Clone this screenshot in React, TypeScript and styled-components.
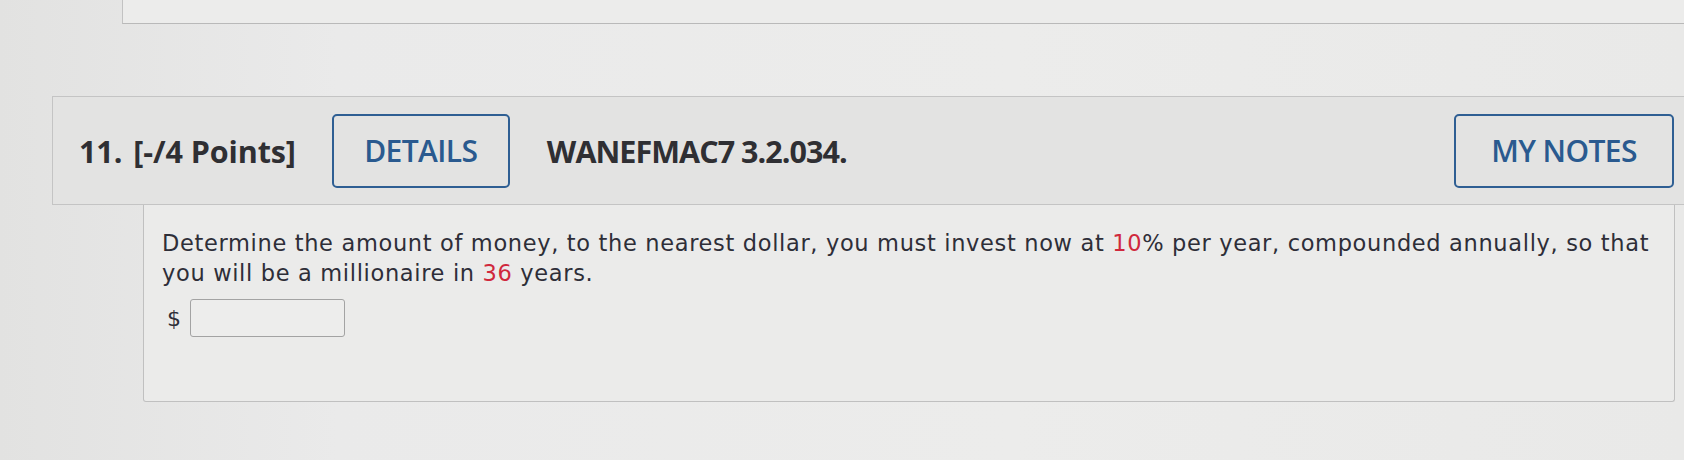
import React from "react";
import styled, { createGlobalStyle } from "styled-components";

const GlobalStyle = createGlobalStyle`
  html, body {
    margin: 0;
    padding: 0;
    background: #e8e8e7;
    overflow: hidden;
  }
  #root {
    width: 1684px;
    height: 460px;
    overflow: hidden;
  }
`;

const Page = styled.div`
  width: 1684px;
  height: 460px;
  overflow: hidden;
  background: linear-gradient(90deg, #e2e2e1 0%, #eaeaea 20%, #ececeb 60%, #e9e9e8 100%);
`;

const PrevBox = styled.div`
  height: 23px;
  margin-left: 122px;
  margin-right: -20px;
  background: #ececeb;
  border-left: 1.5px solid #c2c2c2;
  border-bottom: 1.5px solid #b9b9b9;
`;

const Question = styled.section`
  margin-top: 72px;
  margin-left: 52px;
  margin-right: -20px;
`;

const Header = styled.div`
  box-sizing: border-box;
  height: 109px;
  display: flex;
  align-items: center;
  padding-left: 26px;
  padding-right: 29px;
  background: #e3e3e2;
  border: 1.5px solid #c4c4c4;
  font-family: "Open Sans", "Liberation Sans", sans-serif;
  color: #2f2f33;
`;

const HeadText = styled.span<{ $gap?: number; $track?: number }>`
  font-size: 30.5px;
  font-weight: 700;
  white-space: nowrap;
  margin-left: ${(p) => p.$gap ?? 0}px;
  letter-spacing: ${(p) => p.$track ?? -0.1}px;
`;

const OutlineButton = styled.button<{ $width: number; $gap?: number }>`
  box-sizing: border-box;
  width: ${(p) => p.$width}px;
  height: 74px;
  margin-left: ${(p) => p.$gap ?? 0}px;
  background: transparent;
  border: 2.5px solid #2f5f93;
  border-radius: 5px;
  color: #2a5a8f;
  font-family: "Open Sans", "Liberation Sans", sans-serif;
  font-size: 30px;
  font-weight: 600;
  letter-spacing: -0.6px;
  display: flex;
  align-items: center;
  justify-content: center;
  padding: 0;
`;

const Spacer = styled.div`
  flex: 1;
`;

const Body = styled.div`
  box-sizing: border-box;
  margin-left: 91px;
  width: 1532px;
  padding: 23px 0 64px 18px;
  background: #ebebea;
  border: 1.5px solid #c0c0c0;
  border-top: none;
  border-radius: 0 0 3px 3px;
`;

const Prompt = styled.p`
  margin: 0;
  font-family: "DejaVu Sans", Verdana, sans-serif;
  font-size: 22.5px;
  line-height: 30px;
  color: #2e2e38;
  letter-spacing: 0.66px;
`;

const Red = styled.span`
  color: #d0283c;
`;

const AnswerRow = styled.div`
  display: flex;
  align-items: center;
  margin-top: 11px;
  gap: 9px;
  padding-left: 5px;
`;

const Dollar = styled.span`
  font-family: "DejaVu Sans", Verdana, sans-serif;
  font-size: 22px;
  color: #2e2e38;
`;

const AnswerInput = styled.input`
  box-sizing: border-box;
  width: 155px;
  height: 38px;
  border: 1.5px solid #a3a3a3;
  border-radius: 3px;
  background: #ededec;
  outline: none;
`;

export default function App() {
  return (
    <>
      <GlobalStyle />
      <Page>
        <PrevBox />
        <Question>
          <Header>
            <HeadText>11.</HeadText>
            <HeadText $gap={11}>[-/4 Points]</HeadText>
            <OutlineButton $width={178} $gap={36}>DETAILS</OutlineButton>
            <HeadText $gap={37} $track={-0.95}>WANEFMAC7 3.2.034.</HeadText>
            <Spacer />
            <OutlineButton $width={220}>MY NOTES</OutlineButton>
          </Header>
          <Body>
            <Prompt>
              Determine the amount of money, to the nearest dollar, you must invest now at <Red>10</Red>% per year, compounded annually, so that
              <br />
              you will be a millionaire in <Red>36</Red> years.
            </Prompt>
            <AnswerRow>
              <Dollar>$</Dollar>
              <AnswerInput type="text" aria-label="answer" />
            </AnswerRow>
          </Body>
        </Question>
      </Page>
    </>
  );
}
